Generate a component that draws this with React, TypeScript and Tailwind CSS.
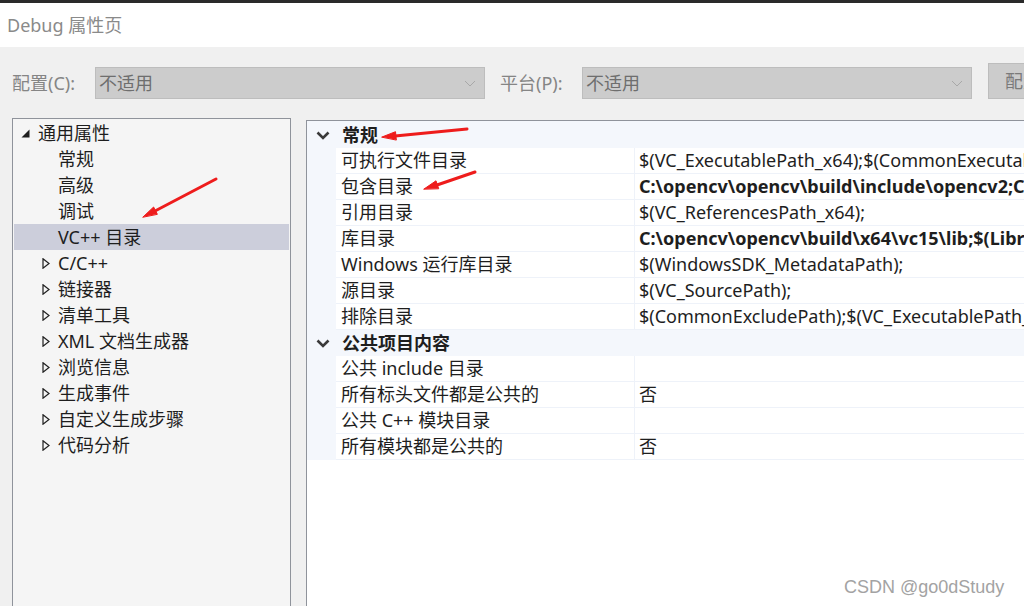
import React from "react";

const uiFont = { fontFamily: '"Noto Sans", "Noto Sans CJK SC", sans-serif' };

const treeChildren = ["常规", "高级", "调试", "VC++ 目录"];
const treeGroups = [
  "C/C++",
  "链接器",
  "清单工具",
  "XML 文档生成器",
  "浏览信息",
  "生成事件",
  "自定义生成步骤",
  "代码分析",
];

const generalRows = [
  { name: "可执行文件目录", value: "$(VC_ExecutablePath_x64);$(CommonExecutablePath)" },
  { name: "包含目录", value: "C:\\opencv\\opencv\\build\\include\\opencv2;C:\\opencv\\opencv\\build\\include;$(IncludePath)", bold: true },
  { name: "引用目录", value: "$(VC_ReferencesPath_x64);" },
  { name: "库目录", value: "C:\\opencv\\opencv\\build\\x64\\vc15\\lib;$(LibraryPath)", bold: true },
  { name: "Windows 运行库目录", value: "$(WindowsSDK_MetadataPath);" },
  { name: "源目录", value: "$(VC_SourcePath);" },
  { name: "排除目录", value: "$(CommonExcludePath);$(VC_ExecutablePath_x64);$(VC_LibraryPath_x64)" },
];

const publicRows = [
  { name: "公共 include 目录", value: "" },
  { name: "所有标头文件都是公共的", value: "否" },
  { name: "公共 C++ 模块目录", value: "" },
  { name: "所有模块都是公共的", value: "否" },
];

const Chevron = () => (
  <svg width="14" height="9" viewBox="0 0 14 9">
    <polyline points="1.5,1.5 7,7 12.5,1.5" fill="none" stroke="#3a3a3a" strokeWidth="2.6" />
  </svg>
);

const SmallChevron = () => (
  <svg width="12" height="7" viewBox="0 0 12 7">
    <polyline points="1,1 6,6 11,1" fill="none" stroke="#a8a8a8" strokeWidth="1" />
  </svg>
);

const Collapsed = () => (
  <svg width="8" height="11" viewBox="0 0 8 11">
    <polygon points="1,0.8 7,5.5 1,10.2" fill="none" stroke="#1e1e1e" strokeWidth="1.2" />
  </svg>
);

const Expanded = () => (
  <svg width="9" height="9" viewBox="0 0 9 9">
    <polygon points="8.5,0.5 8.5,8.5 0.5,8.5" fill="#1e1e1e" />
  </svg>
);

function SectionHeader({ title }: { title: string }) {
  return (
    <div className="flex h-[26px] items-center">
      <div className="flex w-[35px] shrink-0 justify-start pl-[9px]">
        <Chevron />
      </div>
      <span className="font-bold text-[#1e1e1e]">{title}</span>
    </div>
  );
}

function PropRow({ name, value, bold }: { name: string; value: string; bold?: boolean }) {
  return (
    <div className="flex h-[26px] items-stretch">
      <div className="w-[29px] shrink-0" />
      <div className="flex w-[298px] shrink-0 items-center whitespace-nowrap border-b border-[#eef2f9] bg-white pl-[5px] text-[#1e1e1e]">
        {name}
      </div>
      <div className="w-px shrink-0 bg-[#eef2f9]" />
      <div
        className={`flex flex-1 items-center overflow-hidden whitespace-nowrap border-b border-[#eef2f9] bg-white pl-[4px] text-[#1e1e1e] ${
          bold ? "font-bold" : ""
        }`}
      >
        {value}
      </div>
    </div>
  );
}

export default function App() {
  return (
    <div className="relative flex h-[606px] w-[1024px] flex-col overflow-hidden bg-[#f0f0f0] text-[18px]" style={uiFont}>
      {/* window chrome */}
      <div className="h-[3px] shrink-0 bg-[#2a2a2a]" />
      <div className="flex h-[44px] shrink-0 items-center bg-white pl-[7px] text-[18px] text-[#8a8a8a]">Debug 属性页</div>

      {/* configuration bar */}
      <div className="flex h-[52px] shrink-0 items-start pl-[12px] pt-[16px] text-[#858585]">
        <div className="mt-[4px] flex h-[32px] w-[83px] shrink-0 items-center">配置(C):</div>
        <div className="mt-[4px] flex h-[32px] w-[390px] shrink-0 items-center justify-between border border-[#bdbdbd] bg-[#cccccc] pl-[3px] pr-[8px] text-[#6e6e6e]">
          <span>不适用</span>
          <SmallChevron />
        </div>
        <div className="ml-[15px] mt-[4px] flex h-[32px] w-[82px] shrink-0 items-center">平台(P):</div>
        <div className="mt-[4px] flex h-[32px] w-[390px] shrink-0 items-center justify-between border border-[#bdbdbd] bg-[#cccccc] pl-[3px] pr-[8px] text-[#6e6e6e]">
          <span>不适用</span>
          <SmallChevron />
        </div>
        <div className="ml-[16px] flex h-[36px] w-[160px] shrink-0 items-center whitespace-nowrap border border-[#bdbdbd] bg-[#cccccc] pl-[16px] text-[#7a7a7a]">
          配置管理器(O)...
        </div>
      </div>

      {/* panels */}
      <div className="flex min-h-0 flex-1 items-start pl-[12px] pt-[19px]">
        {/* tree */}
        <div className="h-[520px] w-[279px] shrink-0 border border-[#8f939b] bg-[#f5f5f5] pt-[1px] text-[#1e1e1e]">
          <div className="flex h-[26px] items-center pl-[8px]">
            <div className="w-[17px] shrink-0">
              <Expanded />
            </div>
            <span>通用属性</span>
          </div>
          {treeChildren.map((label) => (
            <div
              key={label}
              className={`mx-px flex h-[26px] items-center pl-[44px] ${label === "VC++ 目录" ? "bg-[#cccedb]" : ""}`}
            >
              {label}
            </div>
          ))}
          {treeGroups.map((label) => (
            <div key={label} className="flex h-[26px] items-center pl-[29px]">
              <div className="w-[16px] shrink-0">
                <Collapsed />
              </div>
              <span>{label}</span>
            </div>
          ))}
        </div>

        {/* property grid */}
        <div className="ml-[15px] mt-[2px] h-[520px] min-w-0 flex-1 border-l border-t border-[#8f939b] bg-white">
          <div className="bg-[#f4f7fc]">
            <div className="pt-[1px]">
              <SectionHeader title="常规" />
            </div>
            {generalRows.map((r) => (
              <PropRow key={r.name} {...r} />
            ))}
            <SectionHeader title="公共项目内容" />
            {publicRows.map((r) => (
              <PropRow key={r.name} {...r} />
            ))}
          </div>
        </div>
      </div>

      {/* annotations */}
      <svg className="pointer-events-none absolute left-0 top-0" width="1024" height="606" viewBox="0 0 1024 606">
        <g stroke="#ee1c1c" strokeWidth="3" strokeLinecap="round" fill="#ee1c1c">
          <line x1="467" y1="129" x2="395" y2="136" />
          <polygon points="382,137 395.5,131.7 396.3,139.7" strokeWidth="1" />
          <line x1="475" y1="172" x2="437" y2="185" />
          <polygon points="424,189 436,180.8 438.6,188.4" strokeWidth="1" />
          <line x1="216" y1="179" x2="155" y2="211" />
          <polygon points="143,217 153.6,207 157.2,214" strokeWidth="1" />
        </g>
      </svg>

      <div
        className="absolute left-[844px] top-[576px] text-[18px] leading-[22px] text-[#a3a3a3]"
        style={{ fontFamily: '"Liberation Sans", Arial, sans-serif' }}
      >
        CSDN @go0dStudy
      </div>
    </div>
  );
}
